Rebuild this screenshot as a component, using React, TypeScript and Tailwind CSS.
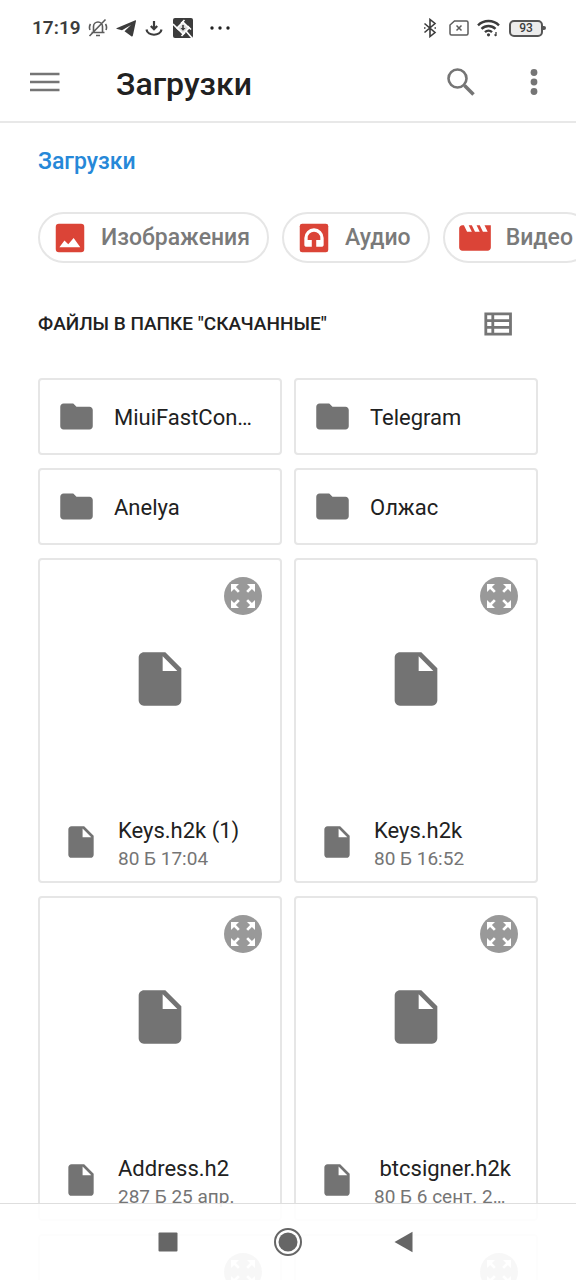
import type { ReactNode } from 'react';
import {
    MdFolder,
    MdInsertDriveFile,
    MdMovie,
    MdZoomOutMap,
} from 'react-icons/md';

type FileItem = {
    id: number;
    name: string;
    info: string;
};

const folders = ['MiuiFastCon…', 'Telegram', 'Anelya', 'Олжас'];

const files: FileItem[] = [
    { id: 1, name: 'Keys.h2k (1)', info: '80 Б 17:04' },
    { id: 2, name: 'Keys.h2k', info: '80 Б 16:52' },
    { id: 3, name: 'Address.h2', info: '287 Б 25 апр.' },
    { id: 4, name: '\u00a0btcsigner.h2k', info: '80 Б 6 сент. 2…' },
    { id: 5, name: '', info: '' },
    { id: 6, name: '', info: '' },
];

function StatusBar() {
    return (
        <div className="flex h-12 items-center justify-between pt-2 pr-[30px] pl-8 text-[#3c3c3c]">
            <div className="flex items-center gap-2">
                <span className="w-12 text-[19px] leading-6 font-semibold">17:19</span>
                {/* Звук выключен */}
                <svg width="20" height="20" viewBox="0 0 20 20" fill="none" stroke="#5c5c5c" strokeWidth="1.6">
                    <path d="M3.500 14.500h13M5.500 14V8.500a4.500 4.500 0 0 1 9 0V14M8 17.500h4M1.500 18 17.500 1.500" />
                    <path d="M2.500 6C1.200 8 1.200 10 2 12M17.500 6c1.300 2 1.300 4 .5 6" />
                </svg>
                {/* Telegram */}
                <svg width="21" height="20" viewBox="0 0 21 20" fill="currentColor">
                    <path d="M19.400 2.300 1 9.900c-.8.400-.7 1 .1 1.200l4.900 1.200L15 7l-6.500 6.300 6.800 5c.7.500 1.400.2 1.600-.7l3.100-14.500c.1-.7-.1-1-.6-.8z" />
                </svg>
                {/* Загрузка */}
                <svg width="18" height="18" viewBox="0 0 18 18" fill="none" stroke="currentColor" strokeWidth="2.200">
                    <path d="M9 2v8M5.800 7 9 10.200 12.200 7M1.500 10.500c1 7 14 7 15 0" />
                </svg>
                <svg className="ml-0.5" width="20" height="20" viewBox="0 0 20 20">
                    <rect width="20" height="20" rx="2" fill="currentColor" />
                    <path d="M10 4 16 10 10 16 4 10z" fill="#ddd" stroke="#fff" strokeWidth="1.500" />
                    <path d="M11.500 2 8 5.500M18 11.500 14.500 8M8.500 18l3.500-3.500M0 6l6 6M13 13l6 7" stroke="#fff" strokeWidth="1.600" />
                    <path d="M9.200 7h1.600v3h1.700L10 12.700 7.500 10h1.700z" fill="currentColor" />
                </svg>
                <svg className="ml-2" width="22" height="6" viewBox="0 0 22 6" fill="#222">
                    <circle cx="3" cy="3" r="1.700" />
                    <circle cx="11" cy="3" r="1.700" />
                    <circle cx="19" cy="3" r="1.700" />
                </svg>
            </div>
            <div className="flex items-center gap-2">
                {/* Bluetooth */}
                <svg width="14" height="20" viewBox="0 0 14 20" fill="none" stroke="currentColor" strokeWidth="1.600">
                    <path d="M1.500 5.500 12 14.500 7 18.500v-17l5 4L1.500 14.500" />
                    <path d="M1 10h1.500M11.500 10H13" />
                </svg>
                {/* Нет SIM */}
                <svg className="ml-1" width="20" height="16" viewBox="0 0 20 16" fill="none" stroke="#5c5c5c" strokeWidth="1.500">
                    <path d="M5.500 1H17.500a1.500 1.500 0 0 1 1.500 1.500v11a1.500 1.500 0 0 1-1.500 1.500H2.500A1.500 1.500 0 0 1 1 13.500V5z" />
                    <path d="M7.500 5.500l5 5M12.500 5.500l-5 5" />
                </svg>
                {/* Wi-Fi */}
                <svg width="24" height="18" viewBox="0 0 24 18" fill="none" stroke="currentColor" strokeWidth="2.400">
                    <path d="M1 6.300a15 15 0 0 1 21 0M4.500 9.800a10 10 0 0 1 14 0M8 13.200a5 5 0 0 1 7 0" />
                    <circle cx="11.500" cy="15.800" r="1.600" fill="currentColor" stroke="none" />
                    <path d="M19 13v4M17.500 15.500 19 17" strokeWidth="1.300" />
                </svg>
                <div className="flex items-center">
                    <span className="flex h-[17px] w-[34px] items-center justify-center rounded-[5px] border-2 border-[#555] bg-[#ececec] text-[12px] leading-3 font-medium">
                        93
                    </span>
                    <span className="h-1 w-[3px] rounded-r-sm bg-[#555]" />
                </div>
            </div>
        </div>
    );
}

function Toolbar() {
    return (
        <div className="flex h-[73px] items-center pr-[22px] pb-1.5 pl-[30px] text-[#757575]">
            <button type="button" aria-label="Меню" className="mr-14">
                <svg width="30" height="20" viewBox="0 0 30 20" stroke="currentColor" strokeWidth="2.600">
                    <path d="M0 2h29.500M0 10h29.500M0 18h29.500" />
                </svg>
            </button>
            <h1 className="flex-1 pt-1 text-[32px] leading-10 font-medium text-[#212121]">Загрузки</h1>
            <button type="button" aria-label="Поиск" className="mr-[38px]">
                <svg width="30" height="30" viewBox="0 0 30 30" fill="none" stroke="currentColor">
                    <circle cx="11.500" cy="11.500" r="9" strokeWidth="2.600" />
                    <path d="M18.500 18.500 27.500 27.500" strokeWidth="3.600" />
                </svg>
            </button>
            <button type="button" aria-label="Ещё">
                <svg width="40" height="40" viewBox="0 0 40 40" fill="currentColor">
                    <circle cx="20" cy="10.500" r="3.400" />
                    <circle cx="20" cy="20" r="3.400" />
                    <circle cx="20" cy="29.500" r="3.400" />
                </svg>
            </button>
        </div>
    );
}

function ImageIcon() {
    return (
        <svg width="38" height="38" viewBox="0 0 24 24" fill="currentColor">
            <rect x="3" y="3" width="18" height="18" rx="2" />
            <path d="M5.300 17.800 8.500 13.600 10.900 16 14.300 12 18.500 17.800z" fill="#fff" />
        </svg>
    );
}

function AudioIcon() {
    return (
        <svg width="38" height="38" viewBox="0 0 24 24" fill="currentColor">
            <rect x="3" y="3" width="18" height="18" rx="1.500" />
            <path
                d="M12 5.900a6.100 6.100 0 0 0-6.100 6.100v4.200c0 .8.600 1.400 1.400 1.400h3.300v-4.400H8V12a4 4 0 0 1 8 0v1.200h-2.600v4.400h3.300c.8 0 1.400-.6 1.400-1.400V12A6.100 6.100 0 0 0 12 5.900z"
                fill="#fff"
            />
        </svg>
    );
}

function Chip({ icon, label }: { icon: ReactNode; label: string }) {
    return (
        <button
            type="button"
            className="flex h-[51px] shrink-0 items-center gap-3 rounded-full border-2 border-[#e6e6e6] pr-[17px] pl-[11px] text-[#db4437]"
        >
            {icon}
            <span className="text-[23px] leading-7 font-medium text-[#7a7a7a]">{label}</span>
        </button>
    );
}

function FolderCard({ name }: { name: string }) {
    return (
        <button
            type="button"
            className="flex h-[77px] min-w-0 items-center gap-[18px] rounded-sm border-2 border-[#e6e6e6] pr-4 pl-[17px] text-left"
        >
            <MdFolder size={39} className="shrink-0 text-[#737373]" />
            <span className="truncate pt-0.5 text-[22px] leading-7 text-[#212121]">{name}</span>
        </button>
    );
}

function FileCard({ file }: { file: FileItem }) {
    return (
        <article className="relative h-[325px] min-w-0 rounded-sm border-2 border-[#e6e6e6]">
            <button
                type="button"
                aria-label="Открыть"
                className="absolute top-[17px] right-[18px] flex size-[38px] items-center justify-center rounded-full bg-[#999] text-white"
            >
                <MdZoomOutMap size={32} />
            </button>
            <div className="flex h-[238px] items-center justify-center text-[#737373]">
                <MdInsertDriveFile size={64} />
            </div>
            <div className="mt-1 flex h-20 items-center gap-[18px] pr-4 pl-[22px]">
                <MdInsertDriveFile size={38} className="shrink-0 text-[#737373]" />
                <div className="min-w-0 pt-1.5">
                    <p className="truncate text-[22px] leading-7 text-[#212121]">{file.name}</p>
                    <p className="truncate text-[19px] leading-7 text-[#757575]">{file.info}</p>
                </div>
            </div>
        </article>
    );
}

function NavBar() {
    return (
        <nav className="fixed inset-x-0 bottom-0 flex h-[77px] items-center justify-center gap-20 border-t border-[#dedede] bg-white/92 text-[#666]">
            <button type="button" aria-label="Недавние" className="flex w-10 justify-center">
                <svg width="20" height="20" viewBox="0 0 20 20" fill="currentColor">
                    <rect x=".5" y=".5" width="19" height="19" rx="1" />
                </svg>
            </button>
            <button type="button" aria-label="Домой" className="flex w-10 justify-center">
                <svg width="28" height="28" viewBox="0 0 28 28" fill="currentColor">
                    <circle cx="14" cy="14" r="13" fill="none" stroke="currentColor" strokeWidth="2" />
                    <circle cx="14" cy="14" r="9.500" />
                </svg>
            </button>
            <button type="button" aria-label="Назад" className="flex w-10 justify-start pl-1.5">
                <svg width="20" height="22" viewBox="0 0 20 22" fill="currentColor">
                    <path d="M18.500.8v20.400L.5 11z" />
                </svg>
            </button>
        </nav>
    );
}

export default function App() {
    return (
        <div className="flex h-screen flex-col overflow-hidden bg-white font-[Roboto,sans-serif]">
            <header className="shrink-0 border-b-2 border-[#e8e8e8]">
                <StatusBar />
                <Toolbar />
            </header>

            <main className="min-h-0 flex-1 overflow-y-auto [scrollbar-width:none]">
                <div className="px-[38px] pt-[25px]">
                    <a href="#downloads" className="block text-[23px] leading-7 font-medium text-[#2688d8]">
                        Загрузки
                    </a>
                </div>

                <div className="mt-9 flex gap-[13px] overflow-x-auto pl-[38px] [scrollbar-width:none]">
                    <Chip icon={<ImageIcon />} label="Изображения" />
                    <Chip icon={<AudioIcon />} label="Аудио" />
                    <Chip icon={<MdMovie size={38} />} label="Видео" />
                </div>

                <div className="mt-[47px] flex h-7 items-center justify-between pr-16 pl-[38px]">
                    <h2 className="text-[19px] leading-7 font-medium text-[#212121]">ФАЙЛЫ В ПАПКЕ "СКАЧАННЫЕ"</h2>
                    <button type="button" aria-label="Показать списком" className="text-[#757575]">
                        <svg width="28" height="24" viewBox="0 0 28 24" fill="none" stroke="currentColor" strokeWidth="2.800">
                            <path d="M1.800 1.800h24.700v20.400H1.800zM8.800 1.800v20.400M1.800 8.600h24.700M1.800 15.400h24.700" />
                        </svg>
                    </button>
                </div>

                <div className="mt-10 grid grid-cols-2 gap-x-3 gap-y-[13px] px-[38px] pb-24">
                    {folders.map((name) => (
                        <FolderCard key={name} name={name} />
                    ))}
                    {files.map((file) => (
                        <FileCard key={file.id} file={file} />
                    ))}
                </div>
            </main>

            <NavBar />
        </div>
    );
}
